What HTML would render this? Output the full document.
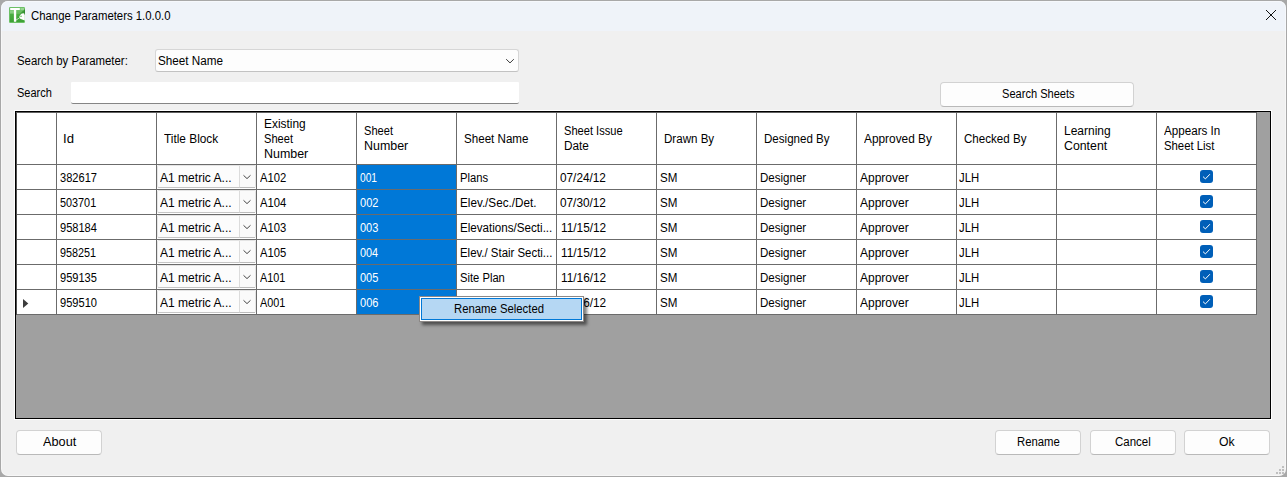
<!DOCTYPE html>
<html lang="en"><head><meta charset="utf-8"><title>Change Parameters 1.0.0.0</title>
<style>
html,body{margin:0;padding:0}
body{width:1287px;height:477px;overflow:hidden;position:relative;background:#a8a8a8;font:12.5px/16px "Liberation Sans",sans-serif;color:#000}
div,span,svg{position:absolute;box-sizing:border-box}
.t{white-space:pre;transform-origin:0 0;font:12.5px/16px "Liberation Sans",sans-serif}
.win{left:1px;top:1px;width:1285px;height:475px;border-radius:7px;background:#f0f0f0;overflow:hidden}
.titlebar{left:0;top:0;width:1285px;height:30px;background:#eff3f9}
.btn{background:#fdfdfd;border:1px solid #d2d2d2;border-bottom-color:#b9b9b9;border-radius:4px}
.v{width:1px;background:#6b6b6b}
.h{height:1px;background:#6b6b6b}
.sel{background:#0078d7}
.cb{background:#fcfcfc;border:1px solid #e4e4e4;border-bottom-color:#c6c6c6;border-radius:2px}
.cbb{background:#fafafa;border-left:1px solid #dcdcdc;border-bottom:1px solid #bbb}
.chk{width:13px;height:13px;background:#005fb8;border-radius:3px}
</style></head><body>
<div class="win"><div class="titlebar"></div><div style="left:0;top:0;width:1285px;height:475px;border-radius:7px;box-shadow:inset 0 0 0 1px rgba(255,255,255,.45)"></div></div>
<svg style="left:9px;top:7px" width="16" height="16" viewBox="0 0 16 16">
<defs><linearGradient id="ig" x1="0" y1="0" x2="0" y2="1"><stop offset="0" stop-color="#79c673"/><stop offset="0.4" stop-color="#62ba5a"/><stop offset="0.42" stop-color="#4caf44"/><stop offset="1" stop-color="#3da136"/></linearGradient></defs>
<rect x="0" y="0" width="16" height="16" rx="1.2" fill="#6cc066"/>
<rect x="1" y="1" width="14" height="14" fill="url(#ig)"/>
<rect x="1" y="3.4" width="3.9" height="3" fill="#93d48e" fill-opacity=".75"/>
<rect x="11.6" y="1" width="3.4" height="2" fill="#a2da9d" fill-opacity=".8"/>
<path d="M15.6 2.8C12.6 4.4 10.4 7.4 8.6 12.8L10 11.4C10.6 9 12.6 7 15.6 6.2z" fill="#2b8a27" fill-opacity=".7"/>
<path d="M15.8 6.2L12.8 6.6Q10.6 8 10.2 10.1L10.8 11.6Q13 12.4 15.8 13.6z" fill="#fff"/>
<path d="M6.6 13.4L10.2 11" stroke="#dff2dd" stroke-width=".8" fill="none"/>
<path d="M1.2 1.1h9.6v1.9H7.2v11.8H4.9V3H1.2z" fill="#fff"/>
<circle cx="12" cy="9.3" r=".75" fill="#58b552"/>
<path d="M15.5 2.5v5" stroke="#2a7f27" stroke-width="1" stroke-opacity=".7"/>
</svg>
<svg style="left:1265px;top:9px" width="12" height="12" viewBox="0 0 12 12"><path d="M1 1L11 11M11 1L1 11" stroke="#111" stroke-width="1" fill="none"/></svg>
<div style="left:155px;top:49px;width:364px;height:23px;background:#fdfdfd;border:1px solid #d6d6d6;border-bottom-color:#c2c2c2;border-radius:3px"></div>
<svg style="left:504px;top:57px" width="12" height="8" viewBox="0 0 12 8"><path d="M2.2 2.2L6 5.9L9.8 2.2" stroke="#3c3c3c" stroke-width="1" fill="none"/></svg>
<div style="left:71px;top:82px;width:448px;height:22px;background:#fff;border-bottom:1px solid #858585;border-radius:1px 1px 2px 2px"></div>
<div class="btn" style="left:940px;top:82px;width:194px;height:25px"></div>
<div style="left:14px;top:110px;width:1258px;height:310px;background:#fff"></div>
<div style="left:15px;top:111px;width:1256px;height:308px;background:#a0a0a0;border:1px solid #000"></div>
<div style="left:16px;top:112px;width:1241px;height:203px;background:#fff"></div>
<div class="sel" style="left:357px;top:165px;width:99px;height:149px"></div>
<div class="cb" style="left:157px;top:165px;width:99px;height:23px"></div><div class="cbb" style="left:239px;top:166px;width:16px;height:22px"></div><svg style="left:242px;top:173px" width="10" height="7" viewBox="0 0 10 7"><path d="M1.5 2.3L5 5.6L8.5 2.3" stroke="#444" stroke-width="1" fill="none"/></svg>
<div class="cb" style="left:157px;top:190px;width:99px;height:23px"></div><div class="cbb" style="left:239px;top:191px;width:16px;height:22px"></div><svg style="left:242px;top:198px" width="10" height="7" viewBox="0 0 10 7"><path d="M1.5 2.3L5 5.6L8.5 2.3" stroke="#444" stroke-width="1" fill="none"/></svg>
<div class="cb" style="left:157px;top:215px;width:99px;height:23px"></div><div class="cbb" style="left:239px;top:216px;width:16px;height:22px"></div><svg style="left:242px;top:223px" width="10" height="7" viewBox="0 0 10 7"><path d="M1.5 2.3L5 5.6L8.5 2.3" stroke="#444" stroke-width="1" fill="none"/></svg>
<div class="cb" style="left:157px;top:240px;width:99px;height:23px"></div><div class="cbb" style="left:239px;top:241px;width:16px;height:22px"></div><svg style="left:242px;top:248px" width="10" height="7" viewBox="0 0 10 7"><path d="M1.5 2.3L5 5.6L8.5 2.3" stroke="#444" stroke-width="1" fill="none"/></svg>
<div class="cb" style="left:157px;top:265px;width:99px;height:23px"></div><div class="cbb" style="left:239px;top:266px;width:16px;height:22px"></div><svg style="left:242px;top:273px" width="10" height="7" viewBox="0 0 10 7"><path d="M1.5 2.3L5 5.6L8.5 2.3" stroke="#444" stroke-width="1" fill="none"/></svg>
<div class="cb" style="left:157px;top:290px;width:99px;height:23px"></div><div class="cbb" style="left:239px;top:291px;width:16px;height:22px"></div><svg style="left:242px;top:298px" width="10" height="7" viewBox="0 0 10 7"><path d="M1.5 2.3L5 5.6L8.5 2.3" stroke="#444" stroke-width="1" fill="none"/></svg>
<div class="v" style="left:16px;top:112px;height:203px;background:#505050"></div><div class="h" style="left:16px;top:112px;width:1241px;background:#606060"></div>
<div class="v" style="left:56px;top:113px;height:202px"></div><div class="v" style="left:156px;top:113px;height:202px"></div><div class="v" style="left:256px;top:113px;height:202px"></div><div class="v" style="left:356px;top:113px;height:202px"></div><div class="v" style="left:456px;top:113px;height:202px"></div><div class="v" style="left:556px;top:113px;height:202px"></div><div class="v" style="left:656px;top:113px;height:202px"></div><div class="v" style="left:756px;top:113px;height:202px"></div><div class="v" style="left:856px;top:113px;height:202px"></div><div class="v" style="left:956px;top:113px;height:202px"></div><div class="v" style="left:1056px;top:113px;height:202px"></div><div class="v" style="left:1156px;top:113px;height:202px"></div><div class="v" style="left:1256px;top:113px;height:202px"></div>
<div class="h" style="left:17px;top:164px;width:1240px"></div><div class="h" style="left:17px;top:189px;width:1240px"></div><div class="h" style="left:17px;top:214px;width:1240px"></div><div class="h" style="left:17px;top:239px;width:1240px"></div><div class="h" style="left:17px;top:264px;width:1240px"></div><div class="h" style="left:17px;top:289px;width:1240px"></div><div class="h" style="left:17px;top:314px;width:1240px"></div>
<svg style="left:22px;top:298px" width="8" height="11" viewBox="0 0 8 11"><path d="M1 1L6.3 5.5L1 10z" fill="#3c3c3c"/></svg>
<div class="chk" style="left:1200px;top:170px"></div><svg style="left:1200px;top:170px" width="13" height="13" viewBox="0 0 13 13"><path d="M3 6.6L5.4 8.9L9.9 4.2" stroke="#fff" stroke-width="1" fill="none"/></svg>
<div class="chk" style="left:1200px;top:195px"></div><svg style="left:1200px;top:195px" width="13" height="13" viewBox="0 0 13 13"><path d="M3 6.6L5.4 8.9L9.9 4.2" stroke="#fff" stroke-width="1" fill="none"/></svg>
<div class="chk" style="left:1200px;top:220px"></div><svg style="left:1200px;top:220px" width="13" height="13" viewBox="0 0 13 13"><path d="M3 6.6L5.4 8.9L9.9 4.2" stroke="#fff" stroke-width="1" fill="none"/></svg>
<div class="chk" style="left:1200px;top:245px"></div><svg style="left:1200px;top:245px" width="13" height="13" viewBox="0 0 13 13"><path d="M3 6.6L5.4 8.9L9.9 4.2" stroke="#fff" stroke-width="1" fill="none"/></svg>
<div class="chk" style="left:1200px;top:270px"></div><svg style="left:1200px;top:270px" width="13" height="13" viewBox="0 0 13 13"><path d="M3 6.6L5.4 8.9L9.9 4.2" stroke="#fff" stroke-width="1" fill="none"/></svg>
<div class="chk" style="left:1200px;top:295px"></div><svg style="left:1200px;top:295px" width="13" height="13" viewBox="0 0 13 13"><path d="M3 6.6L5.4 8.9L9.9 4.2" stroke="#fff" stroke-width="1" fill="none"/></svg>
<span class="t" style="left:30.64px;top:8px;transform:scaleX(0.9086)">Change Parameters 1.0.0.0</span>
<span class="t" style="left:16.57px;top:53px;transform:scaleX(0.9114)">Search by Parameter:</span>
<span class="t" style="left:158.15px;top:53px;transform:scaleX(0.9369)">Sheet Name</span>
<span class="t" style="left:16.60px;top:85px;transform:scaleX(0.8807)">Search</span>
<span class="t" style="left:1001.59px;top:86px;transform:scaleX(0.8857)">Search Sheets</span>
<span class="t" style="left:63.30px;top:131px;transform:scaleX(1.0507)">Id</span>
<span class="t" style="left:164.10px;top:131px;transform:scaleX(0.9481)">Title Block</span>
<span class="t" style="left:263.55px;top:116px;transform:scaleX(0.9524)">Existing</span>
<span class="t" style="left:263.79px;top:131px;transform:scaleX(0.8867)">Sheet</span>
<span class="t" style="left:263.50px;top:146px;transform:scaleX(0.9957)">Number</span>
<span class="t" style="left:363.79px;top:123px;transform:scaleX(0.8867)">Sheet</span>
<span class="t" style="left:363.50px;top:138px;transform:scaleX(0.9957)">Number</span>
<span class="t" style="left:463.76px;top:131px;transform:scaleX(0.9281)">Sheet Name</span>
<span class="t" style="left:563.79px;top:123px;transform:scaleX(0.8882)">Sheet Issue</span>
<span class="t" style="left:563.56px;top:138px;transform:scaleX(0.9440)">Date</span>
<span class="t" style="left:663.57px;top:131px;transform:scaleX(0.9258)">Drawn By</span>
<span class="t" style="left:763.57px;top:131px;transform:scaleX(0.9251)">Designed By</span>
<span class="t" style="left:863.92px;top:131px;transform:scaleX(0.9485)">Approved By</span>
<span class="t" style="left:963.73px;top:131px;transform:scaleX(0.9261)">Checked By</span>
<span class="t" style="left:1063.54px;top:123px;transform:scaleX(0.9596)">Learning</span>
<span class="t" style="left:1063.89px;top:138px;transform:scaleX(0.9862)">Content</span>
<span class="t" style="left:1163.82px;top:123px;transform:scaleX(0.9308)">Appears In</span>
<span class="t" style="left:1163.68px;top:138px;transform:scaleX(0.9074)">Sheet List</span>
<span class="t" style="left:59.61px;top:170px;transform:scaleX(0.8868)">382617</span>
<span class="t" style="left:159.92px;top:170px;transform:scaleX(0.9635)">A1 metric A...</span>
<span class="t" style="left:259.93px;top:170px;transform:scaleX(0.8992)">A102</span>
<span class="t" style="left:359.94px;top:170px;transform:scaleX(0.8163);color:#fff">001</span>
<span class="t" style="left:460.10px;top:170px;transform:scaleX(0.9003)">Plans</span>
<span class="t" style="left:559.99px;top:170px;transform:scaleX(0.9431)">07/24/12</span>
<span class="t" style="left:659.96px;top:170px;transform:scaleX(0.9272)">SM</span>
<span class="t" style="left:759.98px;top:170px;transform:scaleX(0.9232)">Designer</span>
<span class="t" style="left:860.22px;top:170px;transform:scaleX(0.9596)">Approver</span>
<span class="t" style="left:959.44px;top:170px;transform:scaleX(0.9032)">JLH</span>
<span class="t" style="left:59.59px;top:195px;transform:scaleX(0.8670)">503701</span>
<span class="t" style="left:159.92px;top:195px;transform:scaleX(0.9635)">A1 metric A...</span>
<span class="t" style="left:259.93px;top:195px;transform:scaleX(0.9025)">A104</span>
<span class="t" style="left:359.91px;top:195px;transform:scaleX(0.8820);color:#fff">002</span>
<span class="t" style="left:460.06px;top:195px;transform:scaleX(0.9353)">Elev./Sec./Det.</span>
<span class="t" style="left:559.99px;top:195px;transform:scaleX(0.9431)">07/30/12</span>
<span class="t" style="left:659.96px;top:195px;transform:scaleX(0.9272)">SM</span>
<span class="t" style="left:759.98px;top:195px;transform:scaleX(0.9232)">Designer</span>
<span class="t" style="left:860.22px;top:195px;transform:scaleX(0.9596)">Approver</span>
<span class="t" style="left:959.44px;top:195px;transform:scaleX(0.9032)">JLH</span>
<span class="t" style="left:59.65px;top:220px;transform:scaleX(0.8853)">958184</span>
<span class="t" style="left:159.92px;top:220px;transform:scaleX(0.9635)">A1 metric A...</span>
<span class="t" style="left:259.93px;top:220px;transform:scaleX(0.8986)">A103</span>
<span class="t" style="left:359.91px;top:220px;transform:scaleX(0.8810);color:#fff">003</span>
<span class="t" style="left:460.07px;top:220px;transform:scaleX(0.9292)">Elevations/Secti...</span>
<span class="t" style="left:560.75px;top:220px;transform:scaleX(0.9468)">11/15/12</span>
<span class="t" style="left:659.96px;top:220px;transform:scaleX(0.9272)">SM</span>
<span class="t" style="left:759.98px;top:220px;transform:scaleX(0.9232)">Designer</span>
<span class="t" style="left:860.22px;top:220px;transform:scaleX(0.9596)">Approver</span>
<span class="t" style="left:959.44px;top:220px;transform:scaleX(0.9032)">JLH</span>
<span class="t" style="left:59.66px;top:245px;transform:scaleX(0.8653)">958251</span>
<span class="t" style="left:159.92px;top:245px;transform:scaleX(0.9635)">A1 metric A...</span>
<span class="t" style="left:259.93px;top:245px;transform:scaleX(0.8987)">A105</span>
<span class="t" style="left:359.92px;top:245px;transform:scaleX(0.8706);color:#fff">004</span>
<span class="t" style="left:460.09px;top:245px;transform:scaleX(0.9128)">Elev./ Stair Secti...</span>
<span class="t" style="left:560.75px;top:245px;transform:scaleX(0.9468)">11/15/12</span>
<span class="t" style="left:659.96px;top:245px;transform:scaleX(0.9272)">SM</span>
<span class="t" style="left:759.98px;top:245px;transform:scaleX(0.9232)">Designer</span>
<span class="t" style="left:860.22px;top:245px;transform:scaleX(0.9596)">Approver</span>
<span class="t" style="left:959.44px;top:245px;transform:scaleX(0.9032)">JLH</span>
<span class="t" style="left:59.65px;top:270px;transform:scaleX(0.8850)">959135</span>
<span class="t" style="left:159.92px;top:270px;transform:scaleX(0.9635)">A1 metric A...</span>
<span class="t" style="left:259.93px;top:270px;transform:scaleX(0.8670)">A101</span>
<span class="t" style="left:359.91px;top:270px;transform:scaleX(0.8810);color:#fff">005</span>
<span class="t" style="left:460.29px;top:270px;transform:scaleX(0.8963)">Site Plan</span>
<span class="t" style="left:560.75px;top:270px;transform:scaleX(0.9468)">11/16/12</span>
<span class="t" style="left:659.96px;top:270px;transform:scaleX(0.9272)">SM</span>
<span class="t" style="left:759.98px;top:270px;transform:scaleX(0.9232)">Designer</span>
<span class="t" style="left:860.22px;top:270px;transform:scaleX(0.9596)">Approver</span>
<span class="t" style="left:959.44px;top:270px;transform:scaleX(0.9032)">JLH</span>
<span class="t" style="left:59.65px;top:295px;transform:scaleX(0.8880)">959510</span>
<span class="t" style="left:159.92px;top:295px;transform:scaleX(0.9635)">A1 metric A...</span>
<span class="t" style="left:259.93px;top:295px;transform:scaleX(0.8670)">A001</span>
<span class="t" style="left:359.91px;top:295px;transform:scaleX(0.8820);color:#fff">006</span>
<span class="t" style="left:560.75px;top:295px;transform:scaleX(0.9468)">11/16/12</span>
<span class="t" style="left:659.96px;top:295px;transform:scaleX(0.9272)">SM</span>
<span class="t" style="left:759.98px;top:295px;transform:scaleX(0.9232)">Designer</span>
<span class="t" style="left:860.22px;top:295px;transform:scaleX(0.9596)">Approver</span>
<span class="t" style="left:959.44px;top:295px;transform:scaleX(0.9032)">JLH</span>
<div style="left:419px;top:296px;width:165px;height:26px;background:#fff;border:1px solid #8c8886;box-shadow:3px 3px 3px rgba(0,0,0,.5)"></div><div style="left:421px;top:298px;width:161px;height:22px;background:#b5d7f3;border:1px solid #0078d7"></div>
<div class="btn" style="left:16px;top:430px;width:86px;height:25px"></div><div class="btn" style="left:995px;top:430px;width:86px;height:25px"></div><div class="btn" style="left:1090px;top:430px;width:86px;height:25px"></div><div class="btn" style="left:1184px;top:430px;width:86px;height:25px"></div>
<span class="t" style="left:454.49px;top:301px;transform:scaleX(0.9059)">Rename Selected</span>
<span class="t" style="left:43.01px;top:434px;transform:scaleX(1.0177)">About</span>
<span class="t" style="left:1016.69px;top:434px;transform:scaleX(0.9061)">Rename</span>
<span class="t" style="left:1114.53px;top:434px;transform:scaleX(0.9192)">Cancel</span>
<span class="t" style="left:1219.46px;top:434px;transform:scaleX(0.9763)">Ok</span>
<svg style="left:1276px;top:466px" width="8" height="8" viewBox="0 0 8 8"><rect x="0" y="6" width="2" height="2" fill="#bfbfbf"/><rect x="3" y="6" width="2" height="2" fill="#bfbfbf"/><rect x="6" y="6" width="2" height="2" fill="#bfbfbf"/><rect x="3" y="3" width="2" height="2" fill="#bfbfbf"/><rect x="6" y="3" width="2" height="2" fill="#bfbfbf"/><rect x="6" y="0" width="2" height="2" fill="#bfbfbf"/></svg>
</body></html>
